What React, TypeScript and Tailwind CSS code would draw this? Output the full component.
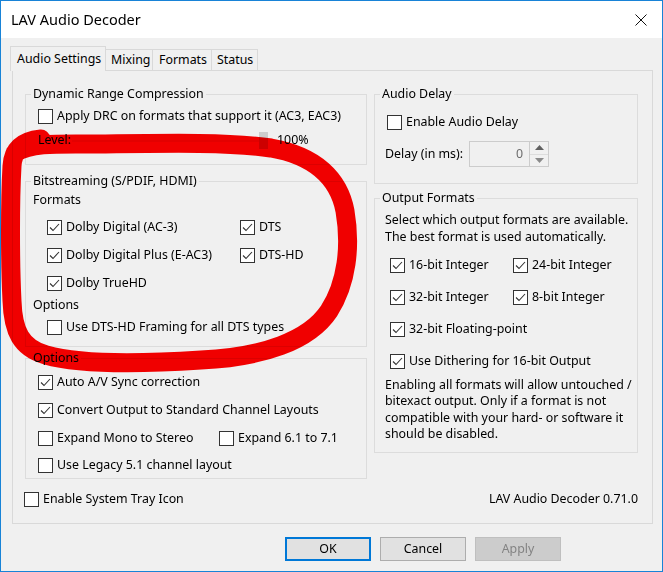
import React from "react";

function Check({ checked }: { checked?: boolean }) {
  return (
    <span className="w-[15px] h-[15px] border border-[#333333] bg-white flex items-center justify-center shrink-0">
      {checked && (
        <svg width="13" height="13" viewBox="0 0 13 13">
          <path d="M2 6.5 L5 9.5 L11 3" stroke="#333333" strokeWidth="1.1" fill="none" />
        </svg>
      )}
    </span>
  );
}

function CB({ label, checked, h = "h-[28px]" }: { label: string; checked?: boolean; h?: string }) {
  return (
    <div className={`flex items-center ${h}`}>
      <Check checked={checked} />
      <span className="ml-[4px] whitespace-nowrap">{label}</span>
    </div>
  );
}

function Group({ title, className, children }: { title: string; className?: string; children: React.ReactNode }) {
  return (
    <fieldset className={`border border-[#dcdcdc] ${className ?? ""}`}>
      <legend className="ml-[5px] px-[2px] leading-[16px] h-[16px]">{title}</legend>
      {children}
    </fieldset>
  );
}

export default function App() {
  return (
    <div className="relative w-[663px] h-[572px] border border-[#1883d7] bg-[#f0f0f0] overflow-hidden font-['Noto_Sans',sans-serif] text-[12.4px] text-black">
      {/* title bar */}
      <div className="h-[37px] bg-white flex items-center justify-between pl-[10px] pr-[15px]">
        <span className="text-[14.5px]">LAV Audio Decoder</span>
        <svg width="12" height="12" viewBox="0 0 12 12">
          <path d="M0.5 0.5 L11.5 11.5 M11.5 0.5 L0.5 11.5" stroke="#111" strokeWidth="1" />
        </svg>
      </div>

      {/* tabs */}
      <div className="flex items-end h-[24px] mt-[8px] pl-[9px] relative z-10">
        <div className="h-[25px] -mb-px w-[96px] border border-b-0 border-[#d9d9d9] bg-[#f0f0f0] flex items-center pl-[6px]">
          Audio Settings
        </div>
        <div className="h-[21px] w-[48px] -ml-px border border-b-0 border-[#d9d9d9] bg-[#f0f0f0] flex items-center pl-[5px] pt-[1px]">
          Mixing
        </div>
        <div className="h-[21px] w-[60px] -ml-px border border-b-0 border-[#d9d9d9] bg-[#f0f0f0] flex items-center pl-[6px] pt-[1px]">
          Formats
        </div>
        <div className="h-[21px] w-[47px] -ml-px border border-b-0 border-[#d9d9d9] bg-[#f0f0f0] flex items-center pl-[5px] pt-[1px]">
          Status
        </div>
      </div>

      {/* tab page */}
      <div className="ml-[11px] w-[641px] h-[454px] border border-[#d9d9d9] pt-[15px] pl-[12px]">
        <div className="flex items-start">
          {/* left column */}
          <div className="w-[342px] flex flex-col">
            <Group title="Dynamic Range Compression" className="pt-[3px] pb-[12px]">
              <div className="pl-[12px]">
                <CB label="Apply DRC on formats that support it (AC3, EAC3)" h="h-[23px]" />
                <div className="flex items-center h-[23px] mt-[1px]">
                  <span className="w-[34px]">Level:</span>
                  <div className="w-[187px] h-[2px] bg-[#e4e4e4]" />
                  <div className="w-[9px] h-[17px] bg-[#cdcdcd]" />
                  <span className="ml-[9px]">100%</span>
                </div>
              </div>
            </Group>

            <Group title="Bitstreaming (S/PDIF, HDMI)" className="mt-[8px] pt-[2px] pb-[5px]">
              <div className="pl-[7px] h-[18px] flex items-center">Formats</div>
              <div className="pl-[21px] mt-[4px] grid grid-cols-[193px_1fr]">
                <CB label="Dolby Digital (AC-3)" checked />
                <CB label="DTS" checked />
                <CB label="Dolby Digital Plus (E-AC3)" checked />
                <CB label="DTS-HD" checked />
                <CB label="Dolby TrueHD" checked />
                <div />
              </div>
              <div className="pl-[7px] h-[16px] flex items-center">Options</div>
              <div className="pl-[21px]">
                <CB label="Use DTS-HD Framing for all DTS types" />
              </div>
            </Group>

            <Group title="Options" className="mt-[3px] pt-[2px]">
              <div className="pl-[12px]">
                <CB label="Auto A/V Sync correction" checked />
                <CB label="Convert Output to Standard Channel Layouts" checked />
                <div className="grid grid-cols-[181px_1fr]">
                  <CB label="Expand Mono to Stereo" />
                  <CB label="Expand 6.1 to 7.1" />
                </div>
                <CB label="Use Legacy 5.1 channel layout" h="h-[26px]" />
              </div>
            </Group>
          </div>

          {/* right column */}
          <div className="ml-[7px] w-[264px] flex flex-col">
            <Group title="Audio Delay" className="pt-[8px] pb-[16px]">
              <div className="pl-[12px]">
                <CB label="Enable Audio Delay" h="h-[24px]" />
              </div>
              <div className="pl-[10px] mt-[7px] h-[26px] flex items-center">
                <span className="w-[84px] whitespace-nowrap">Delay (in ms):</span>
                <div className="w-[61px] h-[26px] border border-[#cccccc] bg-[#f0f0f0] flex items-center justify-end pr-[6px] text-[#6d6d6d]">
                  0
                </div>
                <div className="w-[20px] h-[26px] -ml-px border border-[#cccccc] flex flex-col">
                  <div className="flex-1 flex items-center justify-center border-b border-[#dcdcdc]">
                    <svg width="9" height="5" viewBox="0 0 9 5">
                      <path d="M0 5 L4.5 0 L9 5 Z" fill="#606060" />
                    </svg>
                  </div>
                  <div className="flex-1 flex items-center justify-center">
                    <svg width="9" height="5" viewBox="0 0 9 5">
                      <path d="M0 0 L4.5 5 L9 0 Z" fill="#8a8a8a" />
                    </svg>
                  </div>
                </div>
              </div>
            </Group>

            <Group title="Output Formats" className="mt-[6px] pt-[5px] pb-[9px]">
              <div className="pl-[10px] leading-[17px] whitespace-nowrap">
                Select which output formats are available.
                <br />
                The best format is used automatically.
              </div>
              <div className="pl-[15px] mt-[4px]">
                <div className="grid grid-cols-[123px_1fr]">
                  <CB label="16-bit Integer" checked h="h-[32px]" />
                  <CB label="24-bit Integer" checked h="h-[32px]" />
                  <CB label="32-bit Integer" checked h="h-[32px]" />
                  <CB label="8-bit Integer" checked h="h-[32px]" />
                </div>
                <CB label="32-bit Floating-point" checked h="h-[32px]" />
                <CB label="Use Dithering for 16-bit Output" checked h="h-[32px]" />
              </div>
              <div className="pl-[10px] leading-[16.4px] whitespace-nowrap">
                Enabling all formats will allow untouched /
                <br />
                bitexact output. Only if a format is not
                <br />
                compatible with your hard- or software it
                <br />
                should be disabled.
              </div>
            </Group>
          </div>
        </div>

        <div className="mt-[10px] w-[613px] h-[20px] flex items-center justify-between">
          <div className="-ml-px">
            <CB label="Enable System Tray Icon" h="h-[20px]" />
          </div>
          <span>LAV Audio Decoder 0.71.0</span>
        </div>
      </div>

      {/* buttons */}
      <div className="mt-[13px] pl-[284px] flex gap-[9px]">
        <button className="w-[86px] h-[24px] border-2 border-[#0078d7] bg-[#e1e1e1] flex items-center justify-center">
          OK
        </button>
        <button className="w-[86px] h-[24px] border border-[#adadad] bg-[#e1e1e1] flex items-center justify-center">
          Cancel
        </button>
        <button className="w-[86px] h-[24px] border border-[#bfbfbf] bg-[#cccccc] text-[#838383] flex items-center justify-center">
          Apply
        </button>
      </div>

      {/* red hand-drawn annotation */}
      <svg
        className="absolute left-0 top-0 pointer-events-none mix-blend-multiply"
        width="663"
        height="572"
        viewBox="0 0 663 572"
      >
        <path
          d="M 14 152 C 30 141, 60 143, 100 143 C 170 142, 230 141, 270 147 C 315 155, 338 178, 344 210 C 350 245, 346 282, 328 310 C 308 340, 262 356, 200 359 C 140 363, 80 364, 45 354 C 20 347, 12 330, 11 300 C 9 260, 9 200, 11 165 C 12 150, 20 140, 40 138"
          stroke="#ff0000"
          strokeWidth="19"
          fill="none"
          strokeLinecap="round"
          strokeLinejoin="round"
        />
      </svg>
    </div>
  );
}
